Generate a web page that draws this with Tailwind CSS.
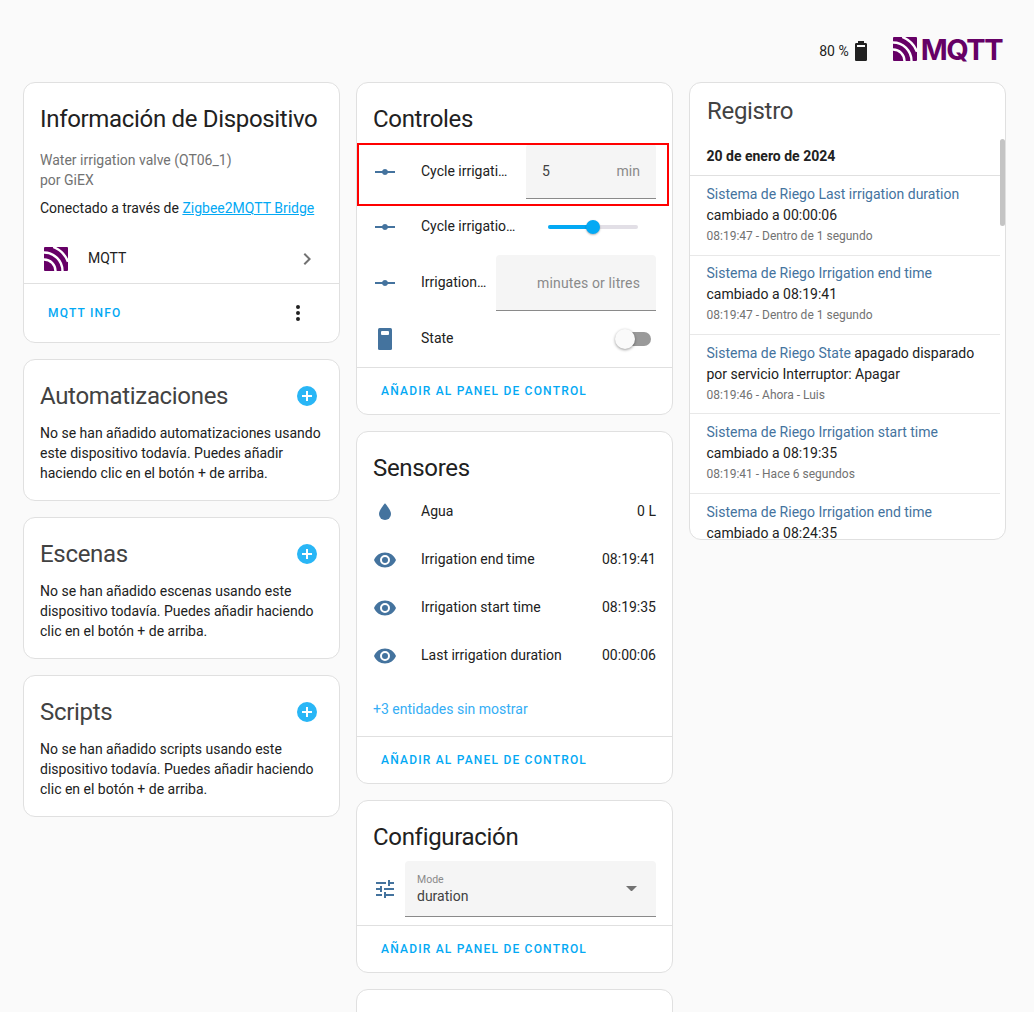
<!DOCTYPE html>
<html>
<head>
<meta charset="utf-8">
<script src="https://cdn.jsdelivr.net/npm/@tailwindcss/browser@4"></script>
</head>
<body class="m-0 bg-[#fafafa] font-['Roboto',sans-serif] text-[#212121]">
<div class="w-[1034px] h-[1012px] overflow-hidden relative">

  <div class="h-[82px] flex justify-end items-center pr-[32px] pt-[20px]">
    <span class="text-[14px] leading-5 text-[#212121]">80 %</span>
    <svg class="w-6 h-6 mr-[20px] fill-[#212121]" viewBox="0 0 24 24"><path d="M16,8H8V6H16M16.67,4H15V2H9V4H7.33A1.33,1.33 0 0,0 6,5.33V20.67C6,21.4 6.6,22 7.33,22H16.67A1.33,1.33 0 0,0 18,20.67V5.33C18,4.6 17.4,4 16.67,4Z"/></svg>
    <svg class="w-6 h-6 mr-[4px] mt-[-4px]" viewBox="0 0 24 24"><rect width="24" height="24" rx="1" fill="#660066"/><path d="M0 12.500A11.500 11.500 0 0 1 11.500 24M0 5.500A18.500 18.500 0 0 1 18.500 24M9.200 0A25.700 25.700 0 0 1 24 14.800" fill="none" stroke="#fff" stroke-width="2.400"/></svg>
    <span class="font-['Inter',sans-serif] font-bold text-[29px] leading-none tracking-[-1.5px] text-[#660066] mt-[-4px]">MQTT</span>
  </div>

  <div class="pl-[23px] flex gap-[16px] items-start">

    <!-- Column 1 -->
    <div class="w-[317px] flex flex-col gap-[16px]">
      <div class="bg-white border border-[#e0e0e0] rounded-xl">
        <h2 class="text-[24px] leading-[32px] tracking-[-0.32px] text-[#212121] pl-4 pt-[20px] font-normal">Información de Dispositivo</h2>
        <div class="px-4 pt-[15px] text-[14px] leading-5">
          <p class="text-[#727272]">Water irrigation valve (QT06_1)</p>
          <p class="text-[#727272]">por GiEX</p>
          <p class="mt-2">Conectado a través de <a class="text-[#03a9f4] underline">Zigbee2MQTT Bridge</a></p>
        </div>
        <div class="h-[49px] mt-[16px] flex items-center pl-5 pr-[20px] text-[14px]">
          <svg class="w-6 h-6 mr-[20px] mt-[1px]" viewBox="0 0 24 24"><rect width="24" height="24" rx="1" fill="#660066"/><path d="M0 12.500A11.500 11.500 0 0 1 11.500 24M0 5.500A18.500 18.500 0 0 1 18.500 24M9.200 0A25.700 25.700 0 0 1 24 14.800" fill="none" stroke="#fff" stroke-width="2.400"/></svg>
          <span class="flex-1">MQTT</span>
          <svg class="w-6 h-6 fill-[#727272]" viewBox="0 0 24 24"><path d="M8.59,16.58L13.17,12L8.59,7.41L10,6L16,12L10,18L8.59,16.58Z"/></svg>
        </div>
        <div class="border-t border-[#e0e0e0] h-[59px] flex items-center justify-between pl-[24px] pr-[29px]">
          <span class="text-[12px] font-medium tracking-[1.2px] text-[#03a9f4]">MQTT INFO</span>
          <svg class="w-6 h-6 fill-[#212121]" viewBox="0 0 24 24"><path d="M12,16A2,2 0 0,1 14,18A2,2 0 0,1 12,20A2,2 0 0,1 10,18A2,2 0 0,1 12,16M12,10A2,2 0 0,1 14,12A2,2 0 0,1 12,14A2,2 0 0,1 10,12A2,2 0 0,1 12,10M12,4A2,2 0 0,1 14,6A2,2 0 0,1 12,8A2,2 0 0,1 10,6A2,2 0 0,1 12,4Z"/></svg>
        </div>
      </div>

      <div class="bg-white border border-[#e0e0e0] rounded-xl h-[142px] px-4 pt-[20px]">
        <div class="flex items-center justify-between pr-[4px] h-[32px]">
          <h2 class="text-[24px] leading-[32px] tracking-[-0.32px] font-normal text-[#424242]">Automatizaciones</h2>
          <svg class="w-6 h-6 fill-[#29b6f6]" viewBox="0 0 24 24"><path d="M17,13H13V17H11V13H7V11H11V7H13V11H17M12,2A10,10 0 0,0 2,12A10,10 0 0,0 12,22A10,10 0 0,0 22,12A10,10 0 0,0 12,2Z"/></svg>
        </div>
        <p class="text-[14px] leading-5 mt-[11px]">No se han añadido automatizaciones usando este dispositivo todavía. Puedes añadir haciendo clic en el botón + de arriba.</p>
      </div>

      <div class="bg-white border border-[#e0e0e0] rounded-xl h-[142px] px-4 pt-[20px]">
        <div class="flex items-center justify-between pr-[4px] h-[32px]">
          <h2 class="text-[24px] leading-[32px] tracking-[-0.32px] font-normal text-[#424242]">Escenas</h2>
          <svg class="w-6 h-6 fill-[#29b6f6]" viewBox="0 0 24 24"><path d="M17,13H13V17H11V13H7V11H11V7H13V11H17M12,2A10,10 0 0,0 2,12A10,10 0 0,0 12,22A10,10 0 0,0 22,12A10,10 0 0,0 12,2Z"/></svg>
        </div>
        <p class="text-[14px] leading-5 mt-[11px]">No se han añadido escenas usando este dispositivo todavía. Puedes añadir haciendo clic en el botón + de arriba.</p>
      </div>

      <div class="bg-white border border-[#e0e0e0] rounded-xl h-[142px] px-4 pt-[20px]">
        <div class="flex items-center justify-between pr-[4px] h-[32px]">
          <h2 class="text-[24px] leading-[32px] tracking-[-0.32px] font-normal text-[#424242]">Scripts</h2>
          <svg class="w-6 h-6 fill-[#29b6f6]" viewBox="0 0 24 24"><path d="M17,13H13V17H11V13H7V11H11V7H13V11H17M12,2A10,10 0 0,0 2,12A10,10 0 0,0 12,22A10,10 0 0,0 22,12A10,10 0 0,0 12,2Z"/></svg>
        </div>
        <p class="text-[14px] leading-5 mt-[11px]">No se han añadido scripts usando este dispositivo todavía. Puedes añadir haciendo clic en el botón + de arriba.</p>
      </div>
    </div>

    <!-- Column 2 -->
    <div class="w-[317px] flex flex-col gap-[16px]">
      <div class="bg-white border border-[#e0e0e0] rounded-xl h-[333px] relative">
        <h2 class="text-[24px] leading-[32px] tracking-[-0.32px] text-[#212121] pl-4 pt-[20px] font-normal h-[61px]">Controles</h2>
        <div class="h-[55px] flex items-center pl-4 pr-4 text-[14px]">
          <svg class="w-6 h-6 fill-[#44739e] mr-6" viewBox="0 0 24 24"><path d="M2,11H9.17C9.58,9.83 10.69,9 12,9C13.31,9 14.42,9.83 14.83,11H22V13H14.83C14.42,14.17 13.31,15 12,15C10.69,15 9.58,14.17 9.17,13H2V11Z"/></svg>
          <span class="flex-1 truncate mt-[-1px]">Cycle irrigation times</span>
          <div class="w-[130px] h-[55px] ml-[18px] shrink-0 bg-[#f5f5f5] border-b border-[#8a8a8a] rounded-t flex items-center justify-between px-4 text-[14px]"><span class="text-[#424242]">5</span><span class="text-[#8a8a8a]">min</span></div>
        </div>
        <div class="h-[56px] flex items-center pl-4 pr-[34px] text-[14px]">
          <svg class="w-6 h-6 fill-[#44739e] mr-6" viewBox="0 0 24 24"><path d="M2,11H9.17C9.58,9.83 10.69,9 12,9C13.31,9 14.42,9.83 14.83,11H22V13H14.83C14.42,14.17 13.31,15 12,15C10.69,15 9.58,14.17 9.17,13H2V11Z"/></svg>
          <span class="flex-1 truncate mt-[-1px]">Cycle irrigation interval</span>
          <div class="w-[90px] h-[4px] ml-[32px] shrink-0 bg-[#e2dfe6] rounded-full relative">
            <div class="h-[4px] w-[45px] rounded-full bg-[#03a9f4]"></div>
            <div class="absolute left-[38px] top-[-5px] w-[14px] h-[14px] rounded-full bg-[#03a9f4] shadow-[0_1px_2px_rgba(0,0,0,0.3)]"></div>
          </div>
        </div>
        <div class="h-[56px] flex items-center pl-4 pr-4 text-[14px]">
          <svg class="w-6 h-6 fill-[#44739e] mr-6" viewBox="0 0 24 24"><path d="M2,11H9.17C9.58,9.83 10.69,9 12,9C13.31,9 14.42,9.83 14.83,11H22V13H14.83C14.42,14.17 13.31,15 12,15C10.69,15 9.58,14.17 9.17,13H2V11Z"/></svg>
          <span class="flex-1 truncate mt-[-1px]">Irrigation target</span>
          <div class="w-[160px] h-[56px] ml-[8px] shrink-0 bg-[#f5f5f5] border-b border-[#8a8a8a] rounded-t flex items-center justify-end px-4 pt-[1px] text-[14px] tracking-[0.13px] text-[#8a8a8a]">minutes or litres</div>
        </div>
        <div class="h-[56px] flex items-center pl-4 pr-[21px] text-[14px]">
          <svg class="w-6 h-6 mr-6" viewBox="0 0 24 24"><path fill="#44739e" d="M6.500 1H17.500A1.500 1.500 0 0 1 19 2.500V21.500A1.500 1.500 0 0 1 17.500 23H6.500A1.500 1.500 0 0 1 5 21.500V2.500A1.500 1.500 0 0 1 6.500 1Z"/><rect x="8" y="4" width="8" height="4" rx="1" fill="#fff"/></svg>
          <span class="flex-1 mt-[-2px]">State</span>
          <div class="relative w-[30px] h-[14px] rounded-full bg-[#9a9a9a]">
            <div class="absolute left-[-6px] top-[-3px] w-[20px] h-[20px] rounded-full bg-[#fafafa] shadow-[0_1px_3px_rgba(0,0,0,0.4)]"></div>
          </div>
        </div>
        <div class="border-t border-[#e0e0e0] h-[47px] flex items-center pl-[24px]">
          <span class="text-[12px] font-medium tracking-[1.2px] text-[#03a9f4]">AÑADIR AL PANEL DE CONTROL</span>
        </div>
        <div class="absolute left-0 top-[60px] w-[312px] h-[63px] border-2 border-[#ff0000]"></div>
      </div>

      <div class="bg-white border border-[#e0e0e0] rounded-xl h-[353px]">
        <h2 class="text-[24px] leading-[32px] tracking-[-0.32px] text-[#212121] pl-4 pt-[20px] font-normal h-[55px]">Sensores</h2>
        <div class="h-[48px] flex items-center px-4 text-[14px]">
          <svg class="w-6 h-6 fill-[#44739e] mr-6 mt-[2px]" viewBox="0 0 24 24"><path d="M12,20A6,6 0 0,1 6,14C6,10 12,3.250 12,3.250C12,3.250 18,10 18,14A6,6 0 0,1 12,20Z"/></svg>
          <span class="flex-1">Agua</span><span>0 L</span>
        </div>
        <div class="h-[48px] flex items-center px-4 text-[14px]">
          <svg class="w-6 h-6 fill-[#44739e] mr-6 mt-[2px]" viewBox="0 0 24 24"><path d="M12,9A3,3 0 0,0 9,12A3,3 0 0,0 12,15A3,3 0 0,0 15,12A3,3 0 0,0 12,9M12,17A5,5 0 0,1 7,12A5,5 0 0,1 12,7A5,5 0 0,1 17,12A5,5 0 0,1 12,17M12,4.500C7,4.500 2.730,7.610 1,12C2.730,16.390 7,19.500 12,19.500C17,19.500 21.270,16.390 23,12C21.270,7.610 17,4.500 12,4.500Z"/></svg>
          <span class="flex-1">Irrigation end time</span><span>08:19:41</span>
        </div>
        <div class="h-[48px] flex items-center px-4 text-[14px]">
          <svg class="w-6 h-6 fill-[#44739e] mr-6 mt-[2px]" viewBox="0 0 24 24"><path d="M12,9A3,3 0 0,0 9,12A3,3 0 0,0 12,15A3,3 0 0,0 15,12A3,3 0 0,0 12,9M12,17A5,5 0 0,1 7,12A5,5 0 0,1 12,7A5,5 0 0,1 17,12A5,5 0 0,1 12,17M12,4.500C7,4.500 2.730,7.610 1,12C2.730,16.390 7,19.500 12,19.500C17,19.500 21.270,16.390 23,12C21.270,7.610 17,4.500 12,4.500Z"/></svg>
          <span class="flex-1">Irrigation start time</span><span>08:19:35</span>
        </div>
        <div class="h-[48px] flex items-center px-4 text-[14px]">
          <svg class="w-6 h-6 fill-[#44739e] mr-6 mt-[2px]" viewBox="0 0 24 24"><path d="M12,9A3,3 0 0,0 9,12A3,3 0 0,0 12,15A3,3 0 0,0 15,12A3,3 0 0,0 12,9M12,17A5,5 0 0,1 7,12A5,5 0 0,1 12,7A5,5 0 0,1 17,12A5,5 0 0,1 12,17M12,4.500C7,4.500 2.730,7.610 1,12C2.730,16.390 7,19.500 12,19.500C17,19.500 21.270,16.390 23,12C21.270,7.610 17,4.500 12,4.500Z"/></svg>
          <span class="flex-1">Last irrigation duration</span><span>00:00:06</span>
        </div>
        <div class="h-[57px] flex items-center px-4 pt-[3px] text-[14px] text-[#35aef5]">+3 entidades sin mostrar</div>
        <div class="border-t border-[#e0e0e0] h-[47px] flex items-center pl-[24px]">
          <span class="text-[12px] font-medium tracking-[1.2px] text-[#03a9f4]">AÑADIR AL PANEL DE CONTROL</span>
        </div>
      </div>

      <div class="bg-white border border-[#e0e0e0] rounded-xl h-[173px]">
        <h2 class="text-[24px] leading-[32px] tracking-[-0.32px] text-[#212121] pl-4 pt-[20px] font-normal h-[60px]">Configuración</h2>
        <div class="h-[56px] flex items-center pl-4 pr-4">
          <svg class="w-6 h-6 fill-[#44739e] mr-2" viewBox="0 0 24 24"><path d="M3,17V19H9V17H3M3,5V7H13V5H3M13,21V19H21V17H13V15H11V21H13M7,9V11H3V13H7V15H9V9H7M21,13V11H11V13H21M15,9H17V7H21V5H17V3H15V9Z"/></svg>
          <div class="flex-1 h-[56px] bg-[#f5f5f5] border-b border-[#8a8a8a] rounded-t pl-3 pr-[19px] flex items-center justify-between">
            <div class="pt-[2px]">
              <div class="text-[10.5px] leading-[12px] text-[#8a8a8a] pt-[1px]">Mode</div>
              <div class="text-[14px] leading-[20px] text-[#424242]">duration</div>
            </div>
            <svg class="w-[11px] h-[5.5px] fill-[#727272]" viewBox="0 0 10 5"><path d="M0 0H10L5 5Z"/></svg>
          </div>
        </div>
        <div class="border-t border-[#e0e0e0] mt-[8px] h-[47px] flex items-center pl-[24px]">
          <span class="text-[12px] font-medium tracking-[1.2px] text-[#03a9f4]">AÑADIR AL PANEL DE CONTROL</span>
        </div>
      </div>

      <div class="bg-white border border-[#e0e0e0] rounded-xl h-[120px]"></div>
    </div>

    <!-- Column 3 -->
    <div class="w-[317px] h-[458px] bg-white border border-[#e0e0e0] rounded-xl relative overflow-hidden">
      <h2 class="text-[24px] leading-[32px] tracking-[-0.32px] text-[#424242] pl-[17px] pt-[12px] h-[56px] font-normal">Registro</h2>
      <div class="h-[37px] pl-[16.5px] pb-[2px] flex items-center text-[14px] border-b border-[#e0e0e0]"><span class="font-bold">20 de enero de 2024</span></div>
      <div class="text-[14px] leading-[21px] pr-[5px]">
        <div class="h-[80px] pl-[16.5px] pt-[8px] border-b border-[#e8e8e8]">
          <p><span class="text-[#44739e]">Sistema de Riego Last irrigation duration</span></p>
          <p>cambiado a 00:00:06</p>
          <p class="text-[12px] text-[#727272]">08:19:47 - Dentro de 1 segundo</p>
        </div>
        <div class="h-[79px] pl-[16.5px] pt-[7px] border-b border-[#e8e8e8]">
          <p><span class="text-[#44739e]">Sistema de Riego Irrigation end time</span></p>
          <p>cambiado a 08:19:41</p>
          <p class="text-[12px] text-[#727272]">08:19:47 - Dentro de 1 segundo</p>
        </div>
        <div class="h-[79px] pl-[16.5px] pt-[8px] border-b border-[#e8e8e8]">
          <p><span class="text-[#44739e]">Sistema de Riego State</span> apagado disparado</p>
          <p>por servicio Interruptor: Apagar</p>
          <p class="text-[12px] text-[#727272]">08:19:46 - Ahora - Luis</p>
        </div>
        <div class="h-[80px] pl-[16.5px] pt-[8px] border-b border-[#e8e8e8]">
          <p><span class="text-[#44739e]">Sistema de Riego Irrigation start time</span></p>
          <p>cambiado a 08:19:35</p>
          <p class="text-[12px] text-[#727272]">08:19:41 - Hace 6 segundos</p>
        </div>
        <div class="h-[79px] pl-[16.5px] pt-[8px]">
          <p><span class="text-[#44739e]">Sistema de Riego Irrigation end time</span></p>
          <p>cambiado a 08:24:35</p>
        </div>
      </div>
      <div class="absolute right-0 top-[56px] w-[5px] h-[87px] rounded-full bg-[#c4c4c4]"></div>
    </div>
  </div>
</div>
</body>
</html>
